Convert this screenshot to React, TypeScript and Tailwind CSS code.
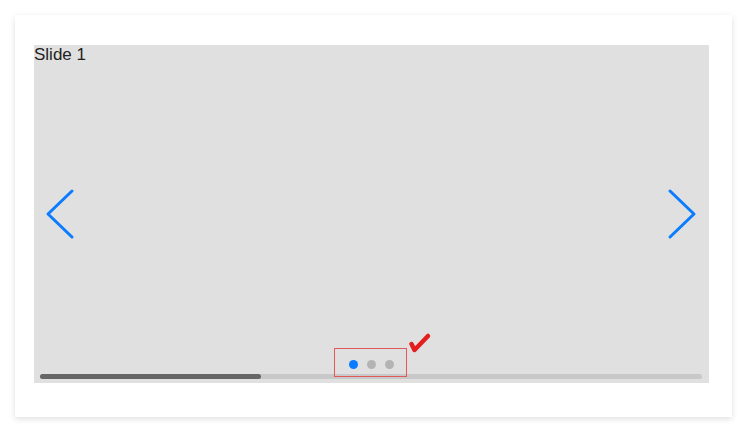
import React from 'react';

const slides = ['Slide 1', 'Slide 2', 'Slide 3'];

export default function App() {
  const active = 0;
  return (
    <div className="min-h-screen bg-white p-[15px] font-['Liberation_Sans',Arial,sans-serif]">
      <div className="w-[717px] h-[402px] bg-white shadow-[0_2px_6px_rgba(0,0,0,0.13)] pt-[30px] pl-[19px]">
        {/* Carousel */}
        <div className="relative w-[675px] h-[338px] bg-[#e0e0e0] flex flex-col pb-[4px]">
          <div className="text-[17px] leading-[20px] text-[#222]">{slides[active]}</div>
          <div className="flex-1" />

          {/* Prev / next arrows */}
          <button className="absolute left-[11px] top-1/2 -translate-y-1/2 w-[32px] h-[54px] flex items-center justify-center">
            <svg width="32" height="54" viewBox="0 0 32 54" fill="none">
              <path d="M27 4 L3 27 L27 50" stroke="#0a7cff" strokeWidth="3" strokeLinecap="round" strokeLinejoin="round" />
            </svg>
          </button>
          <button className="absolute right-[12px] top-1/2 -translate-y-1/2 w-[32px] h-[54px] flex items-center justify-center">
            <svg width="32" height="54" viewBox="0 0 32 54" fill="none">
              <path d="M5 4 L29 27 L5 50" stroke="#0a7cff" strokeWidth="3" strokeLinecap="round" strokeLinejoin="round" />
            </svg>
          </button>

          {/* Dots */}
          <div className="relative z-10 self-center ml-[-2px] w-[73px] h-[29px] border-[1.5px] border-[#e05a5a] flex items-end justify-center gap-[9px] pb-[7px] pl-[2px]">
            {slides.map((s, i) => (
              <span
                key={s}
                className={i === active ? 'w-[9px] h-[9px] rounded-full bg-[#0a7cff]' : 'w-[9px] h-[9px] rounded-full bg-[#b3b3b3]'}
              />
            ))}
            {/* Check mark annotation */}
            <svg className="absolute left-[73px] top-[-17px]" width="24" height="24" viewBox="0 0 24 24" fill="none">
              <path d="M3.5 12 L6.5 18 L20 4" stroke="#e41e1e" strokeWidth="4.5" strokeLinecap="round" strokeLinejoin="round" />
            </svg>
          </div>

          {/* Scrollbar */}
          <div className="mt-[-3px] mx-[6px] mr-[7px] h-[5px] rounded-full bg-[#c8c8c8]">
            <div className="w-[221px] h-full rounded-full bg-[#666]" />
          </div>
        </div>
      </div>
    </div>
  );
}
